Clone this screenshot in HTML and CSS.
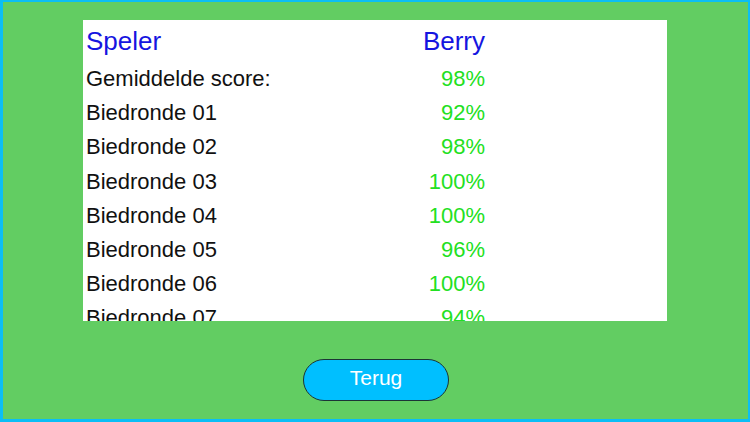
FILE: index.html
```html
<!DOCTYPE html>
<html lang="nl">
<head>
<meta charset="utf-8">
<title>Scores</title>
<link rel="stylesheet" href="styles.css">
</head>
<body>
<div class="screen">
  <section class="panel">
    <div class="row head">
      <span class="label">Speler</span>
      <span class="value">Berry</span>
    </div>
    <div class="row"><span class="label">Gemiddelde score:</span><span class="value">98%</span></div>
    <div class="row"><span class="label">Biedronde 01</span><span class="value">92%</span></div>
    <div class="row"><span class="label">Biedronde 02</span><span class="value">98%</span></div>
    <div class="row"><span class="label">Biedronde 03</span><span class="value">100%</span></div>
    <div class="row"><span class="label">Biedronde 04</span><span class="value">100%</span></div>
    <div class="row"><span class="label">Biedronde 05</span><span class="value">96%</span></div>
    <div class="row"><span class="label">Biedronde 06</span><span class="value">100%</span></div>
    <div class="row"><span class="label">Biedronde 07</span><span class="value">94%</span></div>
  </section>
  <div class="actions">
    <button class="back">Terug</button>
  </div>
</div>
</body>
</html>
```
FILE: styles.css
```css
html, body {
  margin: 0;
  padding: 0;
}

body {
  width: 750px;
  height: 422px;
  overflow: hidden;
  font-family: "Liberation Sans", Arial, sans-serif;
}

.screen {
  box-sizing: border-box;
  width: 750px;
  height: 422px;
  background: #62cd62;
  border-style: solid;
  border-color: #0bbef5;
  border-width: 2px 2px 3px 3px;
  display: flex;
  flex-direction: column;
  align-items: center;
  padding-top: 18px;
}

.panel {
  width: 584px;
  height: 301px;
  margin-right: 1px;
  background: #ffffff;
  overflow: hidden;
  box-sizing: border-box;
  padding: 0 182px 0 3px;
}

.row {
  display: flex;
  justify-content: space-between;
  align-items: center;
  height: 34.2px;
  font-size: 22px;
  color: #111111;
}

.row .value {
  color: #22e022;
}

.row.head {
  height: 42px;
  font-size: 26px;
  color: #1515e0;
}

.row.head .value {
  color: #1515e0;
}

.actions {
  display: flex;
  justify-content: center;
  padding-top: 38px;
}

.back {
  width: 146px;
  height: 42px;
  margin-left: 1px;
  border: 1.5px solid #1c3535;
  border-radius: 21px;
  background: #00bfff;
  color: #ffffff;
  font-family: "Liberation Sans", Arial, sans-serif;
  font-size: 21px;
  padding: 0 0 4px 0;
}
```
